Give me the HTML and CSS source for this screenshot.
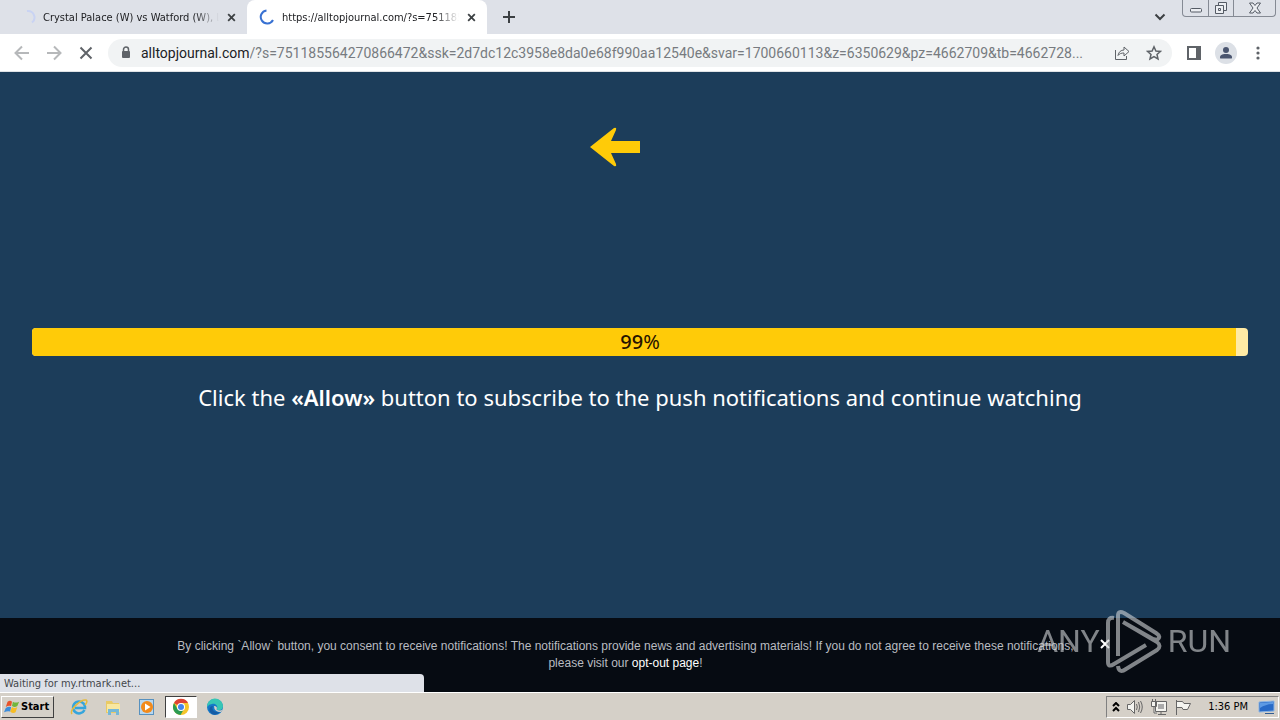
FILE: index.html
```html
<!DOCTYPE html>
<html lang="en">
<head>
<meta charset="utf-8">
<meta name="viewport" content="width=device-width, initial-scale=1">
<title>https://alltopjournal.com</title>
<link rel="stylesheet" href="styles.css">
</head>
<body>
<header class="browser">
  <div class="tabstrip">
    <div class="tab">
      <svg class="spinner spinner-faint" viewBox="0 0 16 16"><path d="M7 2A6.500 6.500 0 0 1 12 13.500"/></svg>
      <button class="tab-title">Crystal Palace (W) vs Watford (W), L</button>
      <button class="tab-close" aria-label="Close tab"><svg viewBox="0 0 10 10"><path d="M1.300 1.300 8.700 8.700M8.700 1.300 1.300 8.700"/></svg></button>
    </div>
    <div class="tab tab-active">
      <svg class="spinner" viewBox="0 0 16 16"><path d="M7.500 1.500A6.500 6.500 0 1 0 14 11"/></svg>
      <button class="tab-title">https://alltopjournal.com/?s=751185</button>
      <button class="tab-close" aria-label="Close tab"><svg viewBox="0 0 10 10"><path d="M1.300 1.300 8.700 8.700M8.700 1.300 1.300 8.700"/></svg></button>
    </div>
    <button class="new-tab" aria-label="New tab"><svg viewBox="0 0 12 12"><path d="M6 0V12M0 6H12"/></svg></button>
    <button class="tab-search" aria-label="Search tabs"><svg viewBox="0 0 12 8"><path d="M1.500 1.500 6 6 10.500 1.500"/></svg></button>
    <div class="window-controls">
      <button class="win win-min" aria-label="Minimize"><svg viewBox="0 0 16 16"><rect x="2.500" y="8.500" width="11" height="3.500" rx="1"/></svg></button>
      <button class="win win-restore" aria-label="Restore"><svg viewBox="0 0 16 16"><path d="M5.500 5V2.500H13.500V10.500H11M2.500 5.500H10.500V13.500H2.500ZM5.500 8.500H7.500V10.500H5.500Z"/></svg></button>
      <button class="win win-close" aria-label="Close"><svg viewBox="0 0 16 16"><path d="M2.500 3H6L8 5.500 10 3H13.500L10 8 13.500 13H10L8 10.500 6 13H2.500L6 8Z"/></svg></button>
    </div>
  </div>
  <div class="toolbar">
    <div class="nav">
      <button class="icon-button muted" aria-label="Back"><svg viewBox="0 0 16 16"><path d="M15 8H2M8 1.500 1.500 8 8 14.500"/></svg></button>
      <button class="icon-button muted" aria-label="Forward"><svg viewBox="0 0 16 16"><path d="M1 8H14M8 1.500 14.500 8 8 14.500"/></svg></button>
      <button class="icon-button" aria-label="Stop loading"><svg viewBox="0 0 16 16"><path d="M2.500 2.500 13.500 13.500M13.500 2.500 2.500 13.500"/></svg></button>
    </div>
    <form class="omnibox">
      <svg class="lock" viewBox="0 0 10 14"><path d="M2.500 6V3.500a2.500 2.500 0 0 1 5 0V6" fill="none" stroke="#5f6368" stroke-width="1.500"/><rect x="1" y="5" width="8" height="7" rx="1" fill="#5f6368"/></svg>
      <label class="host" for="address">alltopjournal.com</label>
      <input class="address" id="address" type="text" value="/?s=751185564270866472&amp;ssk=2d7dc12c3958e8da0e68f990aa12540e&amp;svar=1700660113&amp;z=6350629&amp;pz=4662709&amp;tb=4662728...">
      <button type="button" class="icon-button" aria-label="Share"><svg viewBox="0 0 16 16"><path class="thin" d="M1.500 5V14.500H12.500V11M4 10.500C4.500 7 7 5 10 5V2L15 6.500 10 11V8C7.500 8 5.500 8.500 4 10.500Z"/></svg></button>
      <button type="button" class="icon-button" aria-label="Bookmark"><svg viewBox="0 0 16 16"><path class="medium" d="M8 1.800 9.900 6 14.400 6.400 11 9.400 12 13.900 8 11.500 4 13.900 5 9.400 1.600 6.400 6.100 6Z"/></svg></button>
    </form>
    <div class="extras">
      <button class="icon-button" aria-label="Side panel"><svg viewBox="0 0 16 16"><path d="M2 2H14V14H2Z"/><path class="solid" d="M10 2H14V14H10Z"/></svg></button>
      <button class="icon-button avatar" aria-label="Profile"><svg viewBox="0 0 16 16"><circle cx="8" cy="5" r="3"/><path d="M2 13.500V12C2 9.500 6 9 8 9S14 9.500 14 12V13.500Z"/></svg></button>
      <button class="icon-button" aria-label="Menu"><svg viewBox="0 0 16 16"><g class="dots"><circle cx="8" cy="3" r="1.600"/><circle cx="8" cy="8" r="1.600"/><circle cx="8" cy="13" r="1.600"/></g></svg></button>
    </div>
  </div>
</header>

<div class="viewport">
  <main class="content">
    <div class="arrow-row"><svg class="arrow" viewBox="0 0 51 40"><path d="M1 20 25 1Q28 0 27 3L22 14H51V26H22L27 37Q28 40 25 39Z"/></svg></div>
    <div class="progress" role="progressbar" aria-valuenow="99" aria-valuemin="0" aria-valuemax="100" aria-label="Loading">
      <div class="progress-fill" style="width: 99%"></div>
      <span class="progress-label"><b>99</b>%</span>
    </div>
    <p class="prompt">Click the <b>«Allow»</b> button to subscribe to the push notifications and continue watching</p>
  </main>
  <footer class="consent">
    <p class="consent-text">By clicking `Allow` button, you consent to receive notifications! The notifications provide news and advertising materials! If you do not agree to receive these notifications, please visit our <a href="#">opt-out page</a>!</p>
    <button class="consent-close" aria-label="Dismiss"><svg viewBox="0 0 10 10"><path d="M1 1 9 9M9 1 1 9"/></svg></button>
  </footer>
  <div class="status">Waiting for my.rtmark.net...</div>
  <div class="watermark">
    <span>ANY</span>
    <svg viewBox="0 0 56 66"><path d="M8 10Q2 9 2 15V54Q2 60 8 56L40 37M12 48V8Q12 2 18 5L50 25Q56 29 51 32L47 31 17 14M12 58Q13 66 20 61L51 42Q56 38 51 34L17 14"/></svg>
    <span>RUN</span>
  </div>
</div>

<nav class="taskbar" aria-label="Taskbar">
  <button class="start"><svg viewBox="0 0 18 16"><path fill="#e8532a" d="M4 2Q7 0 9 2L8 7Q5 6 2 8Z"/><path fill="#72b63c" d="M10 2Q13 4 17 2L15 7Q12 9 9 7Z"/><path fill="#3c8ddb" d="M2 9Q5 7 8 8L7 13Q4 12 0 14Z"/><path fill="#f7bd25" d="M9 8Q12 10 15 8L13 14Q10 16 7 13Z"/></svg>Start</button>
  <div class="launchers">
    <button class="launcher" aria-label="Internet Explorer"><svg viewBox="0 0 18 18"><path d="M14.500 12A6 6 0 1 1 15 8.500V10H5" fill="none" stroke="#35a5dc" stroke-width="2.500"/><path d="M2 16C-1 12 11 1 16 2C18 3 16 6 15 7" fill="none" stroke="#e6ba3b" stroke-width="1.500"/></svg></button>
    <button class="launcher" aria-label="Explorer"><svg viewBox="0 0 18 18"><path d="M2 3H8L9 5H15V15H2Z" fill="#e9ca65"/><path d="M3 6H16V14H3Z" fill="#f8e7a0"/><path d="M4 17V11H15V17H12V14H7V17Z" fill="#76b8d7"/></svg></button>
    <button class="launcher" aria-label="Media Player"><svg viewBox="0 0 18 18"><rect x="1.500" y="1.500" width="14" height="15" fill="#b8d7ef" stroke="#5791bf"/><circle cx="9" cy="9" r="6" fill="#f28a1b"/><path d="M7 5.500 12.500 9 7 12.500Z" fill="#fff"/></svg></button>
    <button class="launcher launcher-active" aria-label="Chrome"><svg viewBox="0 0 18 18"><circle cx="9" cy="9" r="8" fill="#f5c52a"/><path d="M9 9 2 5A8 8 0 0 1 16 5H9Z" fill="#dd4335"/><path d="M2 5A8 8 0 0 0 8.500 17L12 11 5.500 11Z" fill="#2b9b52"/><circle cx="9" cy="9" r="4" fill="#fff"/><circle cx="9" cy="9" r="3" fill="#4285ed"/></svg></button>
    <button class="launcher" aria-label="Edge"><svg viewBox="0 0 18 18"><circle cx="9" cy="9" r="8" fill="#1478c8"/><path d="M1 9A8 8 0 0 1 17 8C17 12 13 13 10.500 11.500C13 8 9 5 6 6Q3 6 1 9Z" fill="#37c6b5"/><path d="M7 8C5 11 8 15 14 14Q10 18 6 16C2 13 3 8 7 8Z" fill="#145ba5"/><path d="M8 8Q12 8 10.500 11.500C12 13 15 13 17 11L15 14Q8 14 8 8Z" fill="#d5d0c8"/></svg></button>
  </div>
  <div class="tray">
    <svg class="chevrons" viewBox="0 0 8 10"><path d="M1 4 4 1 7 4M1 9 4 6 7 9"/></svg>
    <svg class="tray-icon" viewBox="0 0 18 18"><path d="M1.500 6.500H4.500L8.500 2.500V15.500L4.500 11.500H1.500Z"/><path fill="none" d="M10.500 6Q12 9 10.500 12M12.500 4Q15 9 12.500 14M14.500 3Q18 9 14.500 15"/></svg>
    <svg class="tray-icon" viewBox="0 0 18 18"><path d="M5.500 3.500H16.500V13.500H5.500ZM8 16.500H16M11 14V16M1.500 3.500H6.500V8.500H1.500ZM2.500 1V3M5.500 1V3M4 9V15H7"/><path d="M8 6H14V11H8Z" class="screen"/></svg>
    <svg class="tray-icon" viewBox="0 0 18 18"><path d="M2.500 2V17M3 3.500H8.500L10 5.500H16.500L13.500 11.500H9L8 9.500H3"/></svg>
    <time class="clock">1:36 PM</time>
    <svg class="tray-icon desktop" viewBox="0 0 18 18"><path d="M1 4 16 3V13L1 14Z" fill="#286ac7" stroke="#8cb4e2"/><path d="M2 5 15 4V6Q8 6 2 10Z" fill="#5d9ae4" stroke="none"/><path d="M7 15.500H16" stroke="#315c91"/></svg>
  </div>
</nav>
</body>
</html>
```

FILE: styles.css
```css
* { box-sizing: border-box; }
body {
  margin: 0;
  min-height: 100vh;
  display: flex;
  flex-direction: column;
  font-family: "DejaVu Sans Condensed", "DejaVu Sans", sans-serif;
  font-size: 11px;
  color: #202124;
}
button { border: 0; padding: 0; background: none; font: inherit; color: inherit; }
svg { display: block; flex: none; }
p { margin: 0; }

.tabstrip { display: flex; align-items: center; height: 34px; background: #dee1e8; }
.tab { display: flex; align-items: center; width: 247px; height: 34px; padding: 0 11px 0 20px; }
.tab-active { width: 240px; padding-left: 12px; background: #fff; border-radius: 8px 8px 0 0; }
.spinner { width: 16px; height: 16px; fill: none; stroke: #3871d2; stroke-width: 2; }
.spinner-faint { stroke: #c9d3f3; }
.tab-title {
  flex: 1;
  min-width: 0;
  margin: 0 8px 0 7px;
  text-align: left;
  white-space: nowrap;
  overflow: hidden;
  mask-image: linear-gradient(to right, #000 86%, transparent);
}
.tab-close { width: 9px; }
.tab-close svg { width: 9px; height: 9px; stroke: #3c4043; stroke-width: 2; }
.new-tab { margin-left: 16px; }
.new-tab svg { width: 12px; height: 12px; stroke: #3c4043; stroke-width: 2; }
.tab-search { margin-left: auto; margin-right: 16px; }
.tab-search svg { width: 12px; height: 8px; fill: none; stroke: #3c4043; stroke-width: 2; }
.window-controls {
  display: flex;
  align-self: flex-start;
  margin-right: 4px;
  border: 1px solid #858a94;
  border-top: 0;
  border-radius: 0 0 4px 4px;
}
.win { display: flex; justify-content: center; width: 25px; height: 16px; }
.win + .win { border-left: 1px solid #858a94; }
.win-close { width: 42px; }
.win svg { width: 16px; height: 16px; fill: #eceef2; stroke: #555b65; }

.toolbar { display: flex; align-items: center; height: 38px; padding: 0 6px; background: #fff; border-bottom: 1px solid #dfe2e5; }
.nav, .extras { display: flex; }
.icon-button { display: grid; place-items: center; width: 32px; height: 28px; flex: none; color: #5f6368; }
.icon-button svg { width: 16px; height: 16px; fill: none; stroke: currentColor; stroke-width: 2; }
.icon-button .thin { stroke-width: 1; }
.icon-button .medium { stroke-width: 1.5; }
.icon-button .solid, .icon-button .dots { fill: currentColor; stroke: none; }
.muted { color: #b6b8ba; }
.omnibox { display: flex; align-items: center; flex: 1; min-width: 0; height: 28px; margin: 0 6px; padding: 0 2px 0 13px; background: #f1f3f4; border-radius: 14px; }
.lock { width: 10px; height: 14px; margin-right: 10px; }
.host, .address { font: 14px/20px Roboto, sans-serif; }
.address { flex: 1; min-width: 0; padding: 0; border: 0; background: none; color: #777b80; text-overflow: ellipsis; }
.avatar svg { width: 22px; height: 22px; padding: 3px; border-radius: 50%; background: #dce0e6; fill: #4a556f; stroke: none; }

.viewport { position: relative; display: flex; flex-direction: column; flex: 1; background: #1c3d5a; }
.content { flex: 1; padding: 55px 32px 0; font-family: "Noto Sans", "Open Sans", sans-serif; }
.arrow-row { display: flex; justify-content: flex-end; width: 50%; }
.arrow { width: 51px; height: 40px; fill: #ffcb08; }
.progress { display: grid; height: 28px; margin-top: 161px; background: #ffeba5; border-radius: 4px; overflow: hidden; }
.progress-fill, .progress-label { grid-area: 1 / 1; }
.progress-fill { background: #ffcb08; }
.progress-label { text-align: center; font-size: 20px; line-height: 27px; color: #261300; }
.progress-label b { font-weight: 500; }
.prompt { margin-top: 25px; text-align: center; font-size: 22px; line-height: 32px; color: #fff; }
.prompt b { font-weight: 600; }

.consent { display: flex; justify-content: center; gap: 9px; height: 74px; padding: 20px 10px 0 0; background: #060b12; }
.consent-text { width: 930px; max-width: 90%; text-align: center; font: 12px/17px "Liberation Sans", Arial, sans-serif; color: #b9bcc1; }
.consent-text a { color: #fff; text-decoration: none; }
.consent-close { align-self: flex-start; margin-top: 1px; }
.consent-close svg { width: 10px; height: 10px; stroke: #fff; stroke-width: 2; }
.status { position: absolute; left: 0; bottom: 0; width: 424px; height: 18px; padding-left: 4px; line-height: 19px; background: #dee1e8; border-radius: 0 4px 0 0; color: #44474b; }
.watermark { position: absolute; right: 49px; bottom: 18px; display: flex; align-items: center; gap: 6px; font: 32px/66px Roboto, sans-serif; color: #cdd0d3; opacity: 0.62; pointer-events: none; }
.watermark svg { width: 56px; height: 66px; fill: none; stroke: currentColor; stroke-width: 4; stroke-linejoin: round; }

.taskbar { display: flex; align-items: center; height: 28px; background: #d5d0c8; border-top: 1px solid #fff; padding: 0 1px; color: #000; }
.start { display: flex; align-items: center; gap: 1px; width: 53px; height: 22px; padding-left: 2px; border: 1px solid; border-color: #fff #404040 #404040 #fff; font-weight: bold; }
.start svg { width: 16px; height: 16px; }
.launchers { display: flex; gap: 2px; margin-left: 9px; }
.launcher { display: grid; place-items: center; width: 32px; height: 22px; }
.launcher svg { width: 18px; height: 18px; }
.launcher-active { background: #fff; border: 1px solid; border-color: #404040 #fff #fff #404040; }
.tray { display: flex; align-items: center; gap: 6px; height: 22px; margin-left: auto; padding: 0 2px 0 5px; border: 1px solid; border-color: #808080 #fff #fff #808080; }
.chevrons { width: 8px; height: 10px; fill: none; stroke: #000; stroke-width: 2; }
.tray-icon { width: 18px; height: 18px; fill: #f4f4f0; stroke: #666; }
.tray-icon .screen { fill: #aaa; stroke: none; }
.clock { margin: 0 4px 0 10px; }
.desktop { fill: none; }
```
